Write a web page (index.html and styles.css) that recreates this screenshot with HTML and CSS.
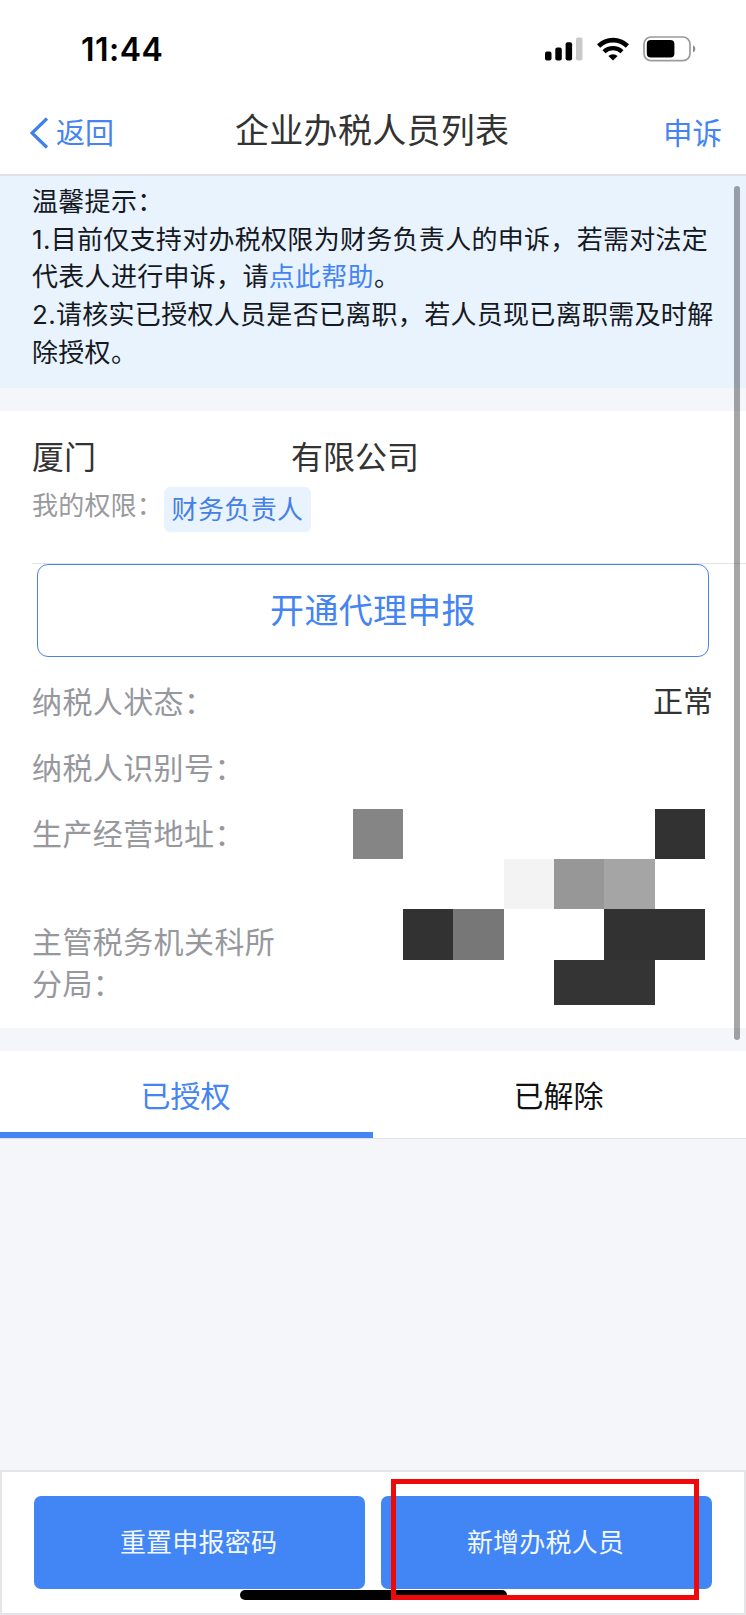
FILE: index.html
```html
<!DOCTYPE html>
<html lang="zh-CN">
<head>
  <meta charset="UTF-8" />
  <meta name="viewport" content="width=device-width, initial-scale=1.0"/>
  <title>企业办税人员列表</title>
  <link rel="stylesheet" href="styles.css">
</head>
<body>

<!-- Status bar -->
<div class="status-bar">
  <span class="time">11:44</span>
  <div class="status-icons">
    <svg class="signal" width="38" height="24" viewBox="0 0 38 24">
      <rect x="0" y="14.5" width="6.5" height="9" rx="2"/>
      <rect x="10.3" y="10.5" width="6.5" height="13" rx="2"/>
      <rect x="20.6" y="5.3" width="6.5" height="18.2" rx="2"/>
      <rect x="31" y="0.5" width="6.5" height="23" rx="2" fill="#c9c9c9"/>
    </svg>
    <svg class="wifi" width="32" height="24" viewBox="0 0 32 24">
      <path d="M1.6 9 A20.6 20.6 0 0 1 30.4 9" fill="none" stroke="#000" stroke-width="4.6"/>
      <path d="M7 14.8 A13 13 0 0 1 25 14.8" fill="none" stroke="#000" stroke-width="4.3"/>
      <path d="M11.4 19.1 A6.6 6.6 0 0 1 20.6 19.1 L16 23.6 Z"/>
    </svg>
    <svg class="battery" width="53" height="26" viewBox="0 0 53 26">
      <rect x="1" y="1" width="46" height="23.6" rx="7" fill="none" stroke="#9b9b9b" stroke-width="1.7"/>
      <rect x="3.8" y="4" width="27.6" height="17.4" rx="4"/>
      <path d="M50 9.2 Q52.4 10.2 52.4 13 Q52.4 15.8 50 16.6 Z" fill="#8e8e8e"/>
    </svg>
  </div>
</div>

<!-- Nav bar -->
<header class="navbar">
  <a class="back" href="#">
    <svg width="19" height="32" viewBox="0 0 19 32">
      <path d="M17 1.5 L2 16 L17 30.5" fill="none" stroke="#4080ee" stroke-width="3.2"/>
    </svg>
    <span>返回</span>
  </a>
  <h1>企业办税人员列表</h1>
  <a class="appeal" href="#">申诉</a>
</header>

<main class="content">
  <section class="notice">
    <p>温馨提示：</p>
    <p>1.目前仅支持对办税权限为财务负责人的申诉，若需对法定<br>代表人进行申诉，请<a href="#">点此帮助</a>。</p>
    <p>2.请核实已授权人员是否已离职，若人员现已离职需及时解<br>除授权。</p>
  </section>

  <!-- Company card -->
  <section class="company">
    <div class="company-head">
      <h2><span>厦门</span><span>有限公司</span></h2>
      <div class="role">
        <span class="role-label">我的权限：</span>
        <span class="role-tag">财务负责人</span>
      </div>
    </div>
    <button class="btn-agent">开通代理申报</button>
    <div class="info-row">
      <span class="label">纳税人状态：</span>
      <span class="value">正常</span>
    </div>
    <div class="info-row">
      <span class="label">纳税人识别号：</span>
    </div>
    <div class="info-masked">
      <div class="labels">
        <p class="label">生产经营地址：</p>
        <p class="label office">主管税务机关科所<br>分局：</p>
      </div>
      <!-- hidden address and tax office -->
      <div class="mask">
        <i class="m1"></i>
        <i class="m2"></i>
        <i class="m3"></i>
        <i class="m4"></i>
        <i class="m5"></i>
        <i class="m6"></i>
        <i class="m7"></i>
        <i class="m8"></i>
        <i class="m9"></i>
      </div>
    </div>
  </section>

  <nav class="tabs">
    <a class="tab active" href="#">已授权</a>
    <a class="tab" href="#">已解除</a>
  </nav>
  <div class="scrollbar"></div>
</main>

<footer class="footer">
  <button class="btn">重置申报密码</button>
  <button class="btn">新增办税人员</button>
  <div class="home-indicator"></div>
  <div class="highlight"></div>
</footer>

</body>
</html>
```

FILE: styles.css
```css
* {
  box-sizing: border-box;
}
body {
  margin: 0;
  height: 1615px;
  display: flex;
  flex-direction: column;
  overflow: hidden;
  background: #f4f6fa;
  color: #333;
  font-family: Inter, "Noto Sans CJK SC", sans-serif;
}
h1, h2, p {
  margin: 0;
  font-weight: 400;
}
a {
  color: #4484f3;
  text-decoration: none;
}
button {
  font-family: inherit;
  padding: 0;
}

/* status bar */
.status-bar {
  height: 98px;
  padding: 0 50px 0 81px;
  background: #fff;
  display: flex;
  justify-content: space-between;
  align-items: center;
}
.time {
  color: #000;
  font-size: 32px;
  font-weight: 600;
  letter-spacing: 0.5px;
}
.status-icons {
  display: flex;
  align-items: center;
  gap: 14px;
}

/* nav bar */
.navbar {
  height: 78px;
  padding: 0 24px 10px 30px;
  background: #fff;
  border-bottom: 2px solid #dfe3e8;
  display: grid;
  grid-template-columns: 205px 1fr auto;
  align-items: center;
}
.navbar h1 {
  font-size: 34px;
  letter-spacing: 0.3px;
  line-height: 50px;
}
.back {
  display: flex;
  align-items: center;
  gap: 7px;
  font-size: 29px;
}
.back svg {
  margin-top: 3px;
}
.appeal {
  font-size: 29.5px;
}

.content {
  flex: 1;
  position: relative;
}
.notice {
  height: 212px;
  padding: 7px 0 0 32px;
  background: #e8f3fe;
  color: #16191f;
  font-size: 26px;
  letter-spacing: 0.3px;
  line-height: 37.7px;
  white-space: nowrap;
}

/* company card */
.company {
  height: 617px;
  margin-top: 23px;
  padding-left: 32px;
  background: #fff;
}
.company-head {
  height: 153px;
  padding-top: 24px;
  border-bottom: 1px solid #e3e4e8;
}
.company h2 {
  display: flex;
  gap: 195px;
  font-size: 32px;
  line-height: 46px;
}
.role {
  display: flex;
  align-items: flex-start;
}
.role-label {
  width: 132px;
  color: #999a9e;
  font-size: 26px;
  letter-spacing: 0.2px;
  line-height: 49px;
}
.role-tag {
  width: 147px;
  height: 45px;
  margin-top: 6px;
  border-radius: 6px;
  background: #e9f3fd;
  color: #4580e6;
  font-size: 26px;
  letter-spacing: 0.4px;
  line-height: 46px;
  text-align: center;
}
.btn-agent {
  display: block;
  width: 672px;
  height: 93px;
  margin: 0 0 12.5px 5px;
  padding-bottom: 5px;
  border: 1.5px solid #4b84e6;
  border-radius: 11px;
  background: #fff;
  color: #4484f3;
  font-size: 34px;
  letter-spacing: 0.3px;
}
.info-row {
  height: 65.5px;
  padding-right: 33px;
  display: flex;
  justify-content: space-between;
  align-items: center;
}
.label {
  color: #96989d;
  font-size: 30px;
  letter-spacing: 0.4px;
  line-height: 42px;
}
.value {
  padding-bottom: 2px;
  font-size: 30px;
  line-height: 42px;
}
.info-masked {
  display: flex;
  justify-content: space-between;
  padding-right: 41px;
}
.labels {
  padding-top: 12px;
}
.office {
  margin-top: 66px;
}
.mask {
  margin-top: 8px;
  display: grid;
  grid-template-columns: repeat(7, 50.35px);
  grid-template-rows: repeat(3, 50.35px) 45px;
}
.m1 { grid-area: 1 / 1; background: #858585; }
.m2 { grid-area: 1 / 7; background: #323232; }
.m3 { grid-area: 2 / 4; background: #f3f3f3; }
.m4 { grid-area: 2 / 5; background: #979797; }
.m5 { grid-area: 2 / 6; background: #a5a5a5; }
.m6 { grid-area: 3 / 2; background: #323232; }
.m7 { grid-area: 3 / 3; background: #777; }
.m8 { grid-area: 3 / 6 / 4 / 8; background: #323232; }
.m9 { grid-area: 4 / 5 / 5 / 7; background: #343434; }

/* tabs */
.tabs {
  height: 88px;
  margin-top: 23px;
  background: #fff;
  border-bottom: 1px solid #dfe1e6;
  display: flex;
}
.tab {
  flex: 1;
  height: 87px;
  padding-right: 2px;
  border-bottom: 6px solid transparent;
  color: #111;
  font-size: 30px;
  line-height: 90px;
  text-align: center;
}
.tab.active {
  color: #4484f3;
  border-bottom-color: #4484f3;
}
.scrollbar {
  position: absolute;
  top: 10px;
  right: 6px;
  width: 6px;
  height: 854px;
  border-radius: 3px;
  background: rgba(0, 0, 0, 0.35);
}

/* bottom buttons */
.footer {
  position: relative;
  height: 145px;
  padding: 24px 32px 0;
  border: 2px solid #e4e5e9;
  background: #fff;
  display: flex;
  gap: 16px;
}
.btn {
  flex: 1;
  height: 93px;
  padding: 0 2px 4px 0;
  border: none;
  border-radius: 7px;
  background: #4285f4;
  color: #f2f8ff;
  font-size: 26px;
  letter-spacing: 0.2px;
}
.home-indicator {
  position: absolute;
  left: 238px;
  top: 118px;
  width: 267px;
  height: 10px;
  border-radius: 5px;
  background: #000;
}
.highlight {
  position: absolute;
  left: 389px;
  top: 7px;
  width: 308px;
  height: 121px;
  border: 5px solid #ee0a0a;
}
```
